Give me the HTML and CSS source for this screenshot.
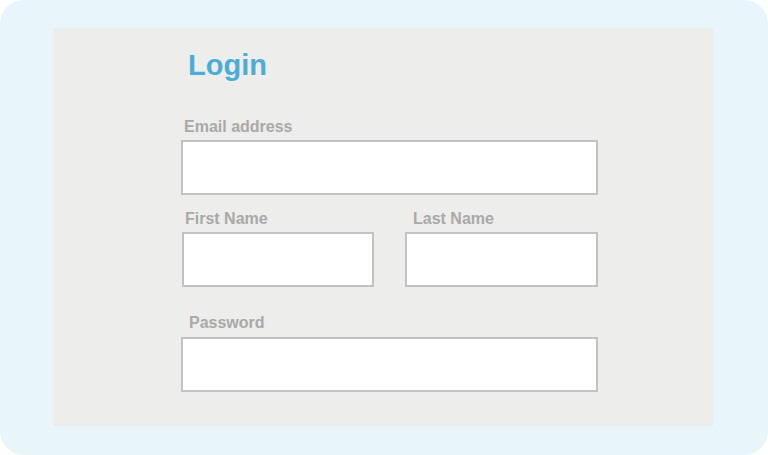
FILE: index.html
```html
<!DOCTYPE html>
<html lang="en">
  <head>
    <meta charset="UTF-8" />
    <meta name="viewport" content="width=device-width, initial-scale=1.0" />
    <title>Login</title>
    <link rel="stylesheet" href="styles.css">
  </head>
  <body>
    <div class="frame">
      <div class="panel">
        <h1 class="title">Login</h1>
        <form class="login-form">
          <div class="field">
            <label class="label" for="email">Email address</label>
            <input class="box" type="email" id="email" />
          </div>
          <div class="row">
            <div class="field">
              <label class="label" for="first">First Name</label>
              <input class="box" type="text" id="first" />
            </div>
            <div class="field">
              <label class="label label-wide" for="last">Last Name</label>
              <input class="box" type="text" id="last" />
            </div>
          </div>
          <div class="field field-pass">
            <label class="label label-wide" for="password">Password</label>
            <input class="box" type="password" id="password" />
          </div>
        </form>
      </div>
    </div>
  </body>
</html>
```

FILE: styles.css
```css
body {
  margin: 0;
  background: #fff;
  font-family: "Liberation Sans", Arial, sans-serif;
}

.frame {
  width: 768px;
  height: 455px;
  box-sizing: border-box;
  padding: 28px 55px 29px 53px;
  background: #e8f6fb;
  border-radius: 24px;
}

.panel {
  height: 398px;
  box-sizing: border-box;
  padding: 22px 0 0 128px;
  background: #ededeb;
}

.title {
  margin: 0 0 39px 7px;
  font-size: 29px;
  line-height: 30px;
  font-weight: bold;
  color: #4badd7;
}

.login-form {
  width: 417px;
}

.field {
  display: flex;
  flex-direction: column;
}

.label {
  margin: 0 0 5px 3px;
  font-size: 16px;
  line-height: 16px;
  font-weight: bold;
  color: #a9a9a9;
}

.label-wide {
  margin-left: 8px;
}

.box {
  height: 55px;
  margin: 0;
  box-sizing: border-box;
  background: #fff;
  border: 2px solid #c2c2c2;
  border-radius: 0;
}

.row {
  display: grid;
  grid-template-columns: 192px 193px;
  column-gap: 31px;
  margin: 16px 0 0 1px;
}

.field-pass {
  margin-top: 28px;
}

.field-pass .label {
  margin-bottom: 6px;
}
```
